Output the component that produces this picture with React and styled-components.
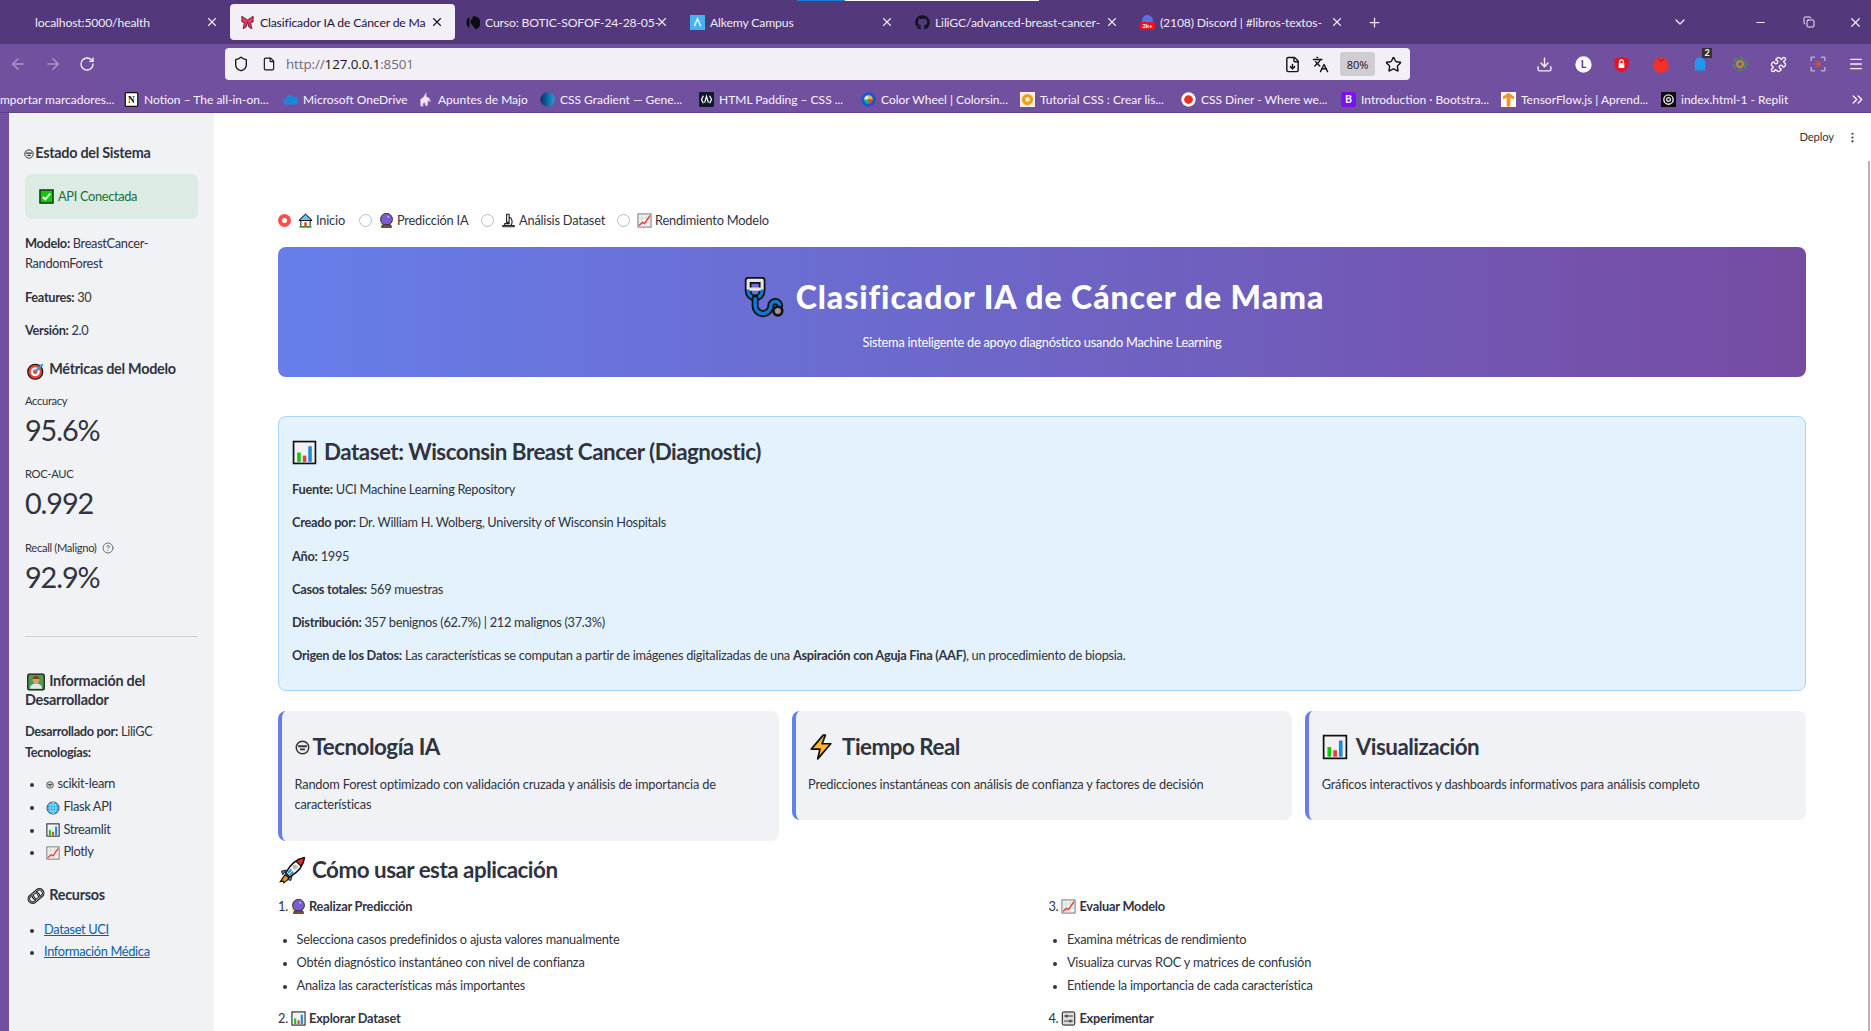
import React from "react";
import styled, { createGlobalStyle } from "styled-components";
import {
  ArrowLeft,
  ArrowRight,
  RotateCw,
  Shield,
  File,
  Star,
  Download,
  Languages,
  Puzzle,
  Menu,
  X,
  Plus,
  ChevronDown,
  Minus,
  Copy,
  FileDown,
  ChevronsRight,
  CircleHelp,
  MoreVertical,
} from "lucide-react";
import { FaGithub } from "react-icons/fa";

const GlobalStyle = createGlobalStyle`
  html, body { margin: 0; padding: 0; background: #fff; }
  body { font-family: "Lato", "Noto Sans", sans-serif; color: #31333f; overflow: hidden; }
  * { box-sizing: border-box; }
`;

const Ico = styled.svg`
  width: ${(p) => p.$s || 14}px;
  height: ${(p) => p.$s || 14}px;
  flex: none;
  display: inline-block;
  vertical-align: middle;
`;

const shapes = {
  brain: (
    <>
      <circle cx="12" cy="12" r="10" fill="#eee" stroke="#333" strokeWidth="2.4" />
      <path d="M5 10h14M8 15h8" stroke="#333" strokeWidth="3" />
    </>
  ),
  check: (
    <>
      <rect x="1.5" y="1.5" width="21" height="21" fill="#16c60c" stroke="#111" strokeWidth="2" />
      <path d="M6 12.5l4 4 8-9" fill="none" stroke="#fff" strokeWidth="3" />
    </>
  ),
  target: (
    <>
      <circle cx="11" cy="13" r="10" fill="#e8412c" stroke="#111" strokeWidth="1.6" />
      <circle cx="11" cy="13" r="6" fill="#fff" />
      <circle cx="11" cy="13" r="3" fill="#e8412c" />
      <path d="M11 13L21 3" stroke="#2a9be0" strokeWidth="3" />
    </>
  ),
  chart: (
    <>
      <rect x="1.5" y="1.5" width="21" height="21" fill="#f2f2f2" stroke="#111" strokeWidth="1.6" />
      <rect x="5" y="12" width="3.4" height="9" fill="#16c60c" />
      <rect x="10.4" y="15" width="3.4" height="6" fill="#e8412c" />
      <rect x="15.6" y="6" width="3.4" height="15" fill="#1e88e5" />
    </>
  ),
  graph: (
    <>
      <rect x="1.5" y="1.5" width="21" height="21" fill="#f2f2f2" stroke="#666" strokeWidth="1.4" />
      <path d="M2 8h20M2 15h20M8 2v20M15 2v20" stroke="#ccc" strokeWidth="1" />
      <path d="M3 20l6-5 3 2 9-13" fill="none" stroke="#e8412c" strokeWidth="2.2" />
    </>
  ),
  globe: (
    <>
      <circle cx="12" cy="12" r="10.5" fill="#12a5e8" stroke="#222" strokeWidth="1.2" />
      <path d="M2 12h20M3.5 7h17M3.5 17h17M12 2v20" stroke="#d8f2ff" strokeWidth="1.1" />
      <ellipse cx="12" cy="12" rx="5" ry="10" fill="none" stroke="#d8f2ff" strokeWidth="1.1" />
    </>
  ),
  link: (
    <g fill="none" transform="rotate(-40 12 12)">
      <rect x="1" y="7" width="15" height="10" rx="5" stroke="#111" strokeWidth="3.4" />
      <rect x="8" y="7" width="15" height="10" rx="5" stroke="#111" strokeWidth="3.4" />
      <rect x="1" y="7" width="15" height="10" rx="5" stroke="#aaa" strokeWidth="1.2" />
      <rect x="8" y="7" width="15" height="10" rx="5" stroke="#aaa" strokeWidth="1.2" />
    </g>
  ),
  dev: (
    <>
      <rect x="1" y="1.5" width="22" height="21" rx="2" fill="#4f9d4a" stroke="#111" strokeWidth="1.6" />
      <circle cx="12" cy="9" r="4.5" fill="#e0a060" />
      <path d="M7.5 8a4.5 4 0 019 0z" fill="#7a4520" />
      <path d="M4 21c0-5 4-7 8-7s8 2 8 7z" fill="#dfe8f2" />
    </>
  ),
  house: (
    <>
      <path d="M12 2L1.5 12h3v10h15V12h3z" fill="#f4f4f4" stroke="#111" strokeWidth="1.5" />
      <path d="M12 2L1.5 12h21z" fill="#6fc4e8" stroke="#111" strokeWidth="1.5" />
      <rect x="10" y="15" width="4" height="7" fill="#e8412c" />
      <path d="M2 22.5h20" stroke="#16c60c" strokeWidth="2" />
    </>
  ),
  crystal: (
    <>
      <circle cx="12" cy="10" r="9.5" fill="#7d5bd0" stroke="#222" strokeWidth="1.4" />
      <circle cx="15" cy="6" r="1.6" fill="#cdb8ff" />
      <path d="M5 19h14l1 4H4z" fill="#8a5a32" stroke="#222" strokeWidth="1.2" />
      <circle cx="3" cy="17" r="1.4" fill="#f4c20d" />
    </>
  ),
  micro: (
    <g fill="none" stroke="#222" strokeWidth="1.8">
      <path d="M9 2h4v13H9zM13 6c5 2 6 9 3 14" />
      <path d="M3 22h18v-2H3z" fill="#eee" />
      <path d="M6 20v-3h8" />
    </g>
  ),
  stetho: (
    <g fill="none" strokeLinecap="round" strokeLinejoin="round">
      <path d="M3.5 2.5h8v6a4 4 0 01-8 0z" stroke="#111" strokeWidth="3.8" />
      <path d="M3.5 2.5h8v5h-8z" stroke="#e4e4e4" strokeWidth="1.8" />
      <path d="M3.5 8.5a4 4 0 008 0" stroke="#0f78d4" strokeWidth="1.8" />
      <path d="M7.5 13v4a4.5 4.5 0 009 0 2.5 2.5 0 015 0" stroke="#111" strokeWidth="4" />
      <path d="M7.5 13v4a4.5 4.5 0 009 0 2.5 2.5 0 015 0" stroke="#0f78d4" strokeWidth="2" />
      <circle cx="20.5" cy="20" r="2.5" fill="#999" stroke="#111" strokeWidth="1.5" />
    </g>
  ),
  zap: <path d="M14 1L3 14h8l-2 9 12-14h-8l3-8z" fill="#fcb72a" stroke="#111" strokeWidth="1.6" strokeLinejoin="round" />,
  rocket: (
    <>
      <path d="M6 16l-4 6 2.5-.5L5 23l5-4z" fill="#f7941d" stroke="#111" strokeWidth="1" />
      <path d="M22.5 1.5c-7 1-12 6-16 13l3.5 3.500c7-4 12-9 12.500-16.500z" fill="#f4f6f8" stroke="#111" strokeWidth="1.4" />
      <path d="M22.5 1.5c-3 .4-5 1.3-7 3l4 4c1.8-2 2.8-4 3-7z" fill="#e8321c" stroke="#111" strokeWidth="1" />
      <circle cx="14.5" cy="9.5" r="2" fill="#bbb" />
      <path d="M8.5 14.5l3-3M10 16.5l3-3" stroke="#2a9be0" strokeWidth="1.8" />
      <path d="M7 12l-4 1 1 3zM12 17l-1 4-3-1z" fill="#2a9be0" stroke="#111" strokeWidth=".8" />
    </>
  ),
  knobs: (
    <>
      <rect x="2" y="1.5" width="20" height="21" rx="2" fill="#ddd" stroke="#111" strokeWidth="1.6" />
      <path d="M5 8h14M5 16h14" stroke="#333" strokeWidth="1.5" />
      <circle cx="9" cy="8" r="2.4" fill="#555" />
      <circle cx="15" cy="16" r="2.4" fill="#555" />
    </>
  ),
  ribbon: <path d="M12 8L3 2v9l4 1-2 10 5-3 2-8 2 8 5 3-2-10 4-1V2z" fill="#f0386b" stroke="#311" strokeWidth="1.2" />,
  k: <path d="M7 3a11 11 0 000 18zM13 2L8 11l9 12a11 11 0 000-21z" fill="#0d0d0d" />,
  alkemy: (
    <>
      <rect x="0" y="0" width="24" height="24" fill="#44b4f0" />
      <path d="M7 18l5-12 5 12" fill="none" stroke="#e8f7ff" strokeWidth="2.4" />
    </>
  ),
  discord: (
    <>
      <circle cx="12" cy="9" r="9" fill="#5572e8" />
      <rect x="0" y="11" width="24" height="13" rx="2" fill="#e81224" />
      <text x="12" y="21.5" fontSize="10" fontWeight="700" textAnchor="middle" fill="#fff" fontFamily="Lato">2k+</text>
    </>
  ),
  notion: (
    <>
      <rect x="2" y="1" width="20" height="22" rx="2" fill="#fff" stroke="#111" strokeWidth="2" />
      <text x="12" y="18" fontSize="15" fontWeight="700" textAnchor="middle" fill="#111" fontFamily="Liberation Serif">N</text>
    </>
  ),
  onedrive: <path d="M6 20a5 5 0 01-1-10 7 7 0 0113-2 6 6 0 013 12z" fill="#1a86d8" />,
  unicorn: <path d="M4 22V12l5-4 4-7v6l5 3 2 5-4-1-1 8H12l-1-5-3 1v5z" fill="#f3e4f2" stroke="#c9a6d8" strokeWidth="1" />,
  gradient: (
    <>
      <defs>
        <linearGradient id="gd" x1="0" x2="1">
          <stop offset="0" stopColor="#0a2a6a" />
          <stop offset="1" stopColor="#19a5d8" />
        </linearGradient>
      </defs>
      <circle cx="12" cy="12" r="11.5" fill="url(#gd)" />
    </>
  ),
  mdn: (
    <>
      <rect width="24" height="24" rx="2" fill="#10182c" />
      <path d="M7 6l-3 6 3 6M17 6l3 6-3 6M9 17l3-10 3 10" fill="none" stroke="#fff" strokeWidth="2" />
    </>
  ),
  wheel: (
    <>
      <circle cx="12" cy="12" r="11.5" fill="#1a55d8" />
      <path d="M12 5a7 7 0 017 7h-7z" fill="#f4c20d" />
      <path d="M19 12a7 7 0 01-7 7v-7z" fill="#e8412c" />
      <path d="M12 19a7 7 0 01-7-7h7z" fill="#19b86a" />
      <path d="M5 12a7 7 0 017-7v7z" fill="#eee" />
    </>
  ),
  tutorial: (
    <>
      <rect width="24" height="24" fill="#fdf2dd" />
      <circle cx="12" cy="12" r="9" fill="#f0a020" />
      <circle cx="12" cy="12" r="3.5" fill="#fdf2dd" />
    </>
  ),
  diner: (
    <>
      <circle cx="12" cy="12" r="11.5" fill="#fff" />
      <circle cx="12" cy="12" r="7" fill="#e8321c" />
    </>
  ),
  boot: (
    <>
      <rect width="24" height="24" rx="5" fill="#7a12f2" />
      <text x="12" y="18" fontSize="17" fontWeight="700" textAnchor="middle" fill="#fff" fontFamily="Lato">B</text>
    </>
  ),
  tf: (
    <>
      <rect width="24" height="24" fill="#fff" />
      <path d="M12 1L3 7v5l6-3v14h6V9l6 3V7z" fill="#f7931e" />
    </>
  ),
  replit: (
    <>
      <rect width="24" height="24" fill="#0b0b0b" />
      <circle cx="12" cy="12" r="7.5" fill="none" stroke="#eee" strokeWidth="2.2" />
      <circle cx="12" cy="12" r="3" fill="none" stroke="#eee" strokeWidth="2" />
    </>
  ),
  lbadge: (
    <>
      <circle cx="12" cy="12" r="11.5" fill="#fff" />
      <text x="12" y="17.5" fontSize="15" fontWeight="700" textAnchor="middle" fill="#53387b" fontFamily="Lato">L</text>
    </>
  ),
  redshield: (
    <>
      <path d="M12 1l10 3v8c0 6-5 9-10 11C7 21 2 18 2 12V4z" fill="#e81224" />
      <rect x="8" y="10" width="8" height="7" fill="#fff" />
      <path d="M9.5 10V8a2.5 2.5 0 015 0v2" fill="none" stroke="#fff" strokeWidth="1.6" />
    </>
  ),
  tomato: (
    <>
      <circle cx="12" cy="13.5" r="10.5" fill="#f0302a" />
      <path d="M7 4l5 3 5-3-3 5h-4z" fill="#c82020" />
    </>
  ),
  ghost: <path d="M5 22V10a7 7 0 0114 0v12l-3-3-2 3-2-3-2 3-2-3z" fill="#1e9be8" />,
  ring: (
    <g fill="none" strokeWidth="3">
      <circle cx="12" cy="12" r="8" stroke="#3f8d5a" strokeDasharray="6 3" />
      <circle cx="12" cy="12" r="4" stroke="#b78a2c" />
    </g>
  ),
  scan: (
    <>
      <path d="M3 8V3h5M16 3h5v5M21 16v5h-5M8 21H3v-5" fill="none" stroke="#b9a9cc" strokeWidth="2" />
      <circle cx="12" cy="12" r="4" fill="#c0504d" />
    </>
  ),
};

const Emoji = ({ name, size }) => (
  <Ico viewBox="0 0 24 24" $s={size} aria-hidden="true">
    {shapes[name]}
  </Ico>
);

/* browser chrome */
const Chrome = styled.header`
  background: #53387b;
  position: relative;
`;
const LoadLine = styled.div`
  position: absolute;
  top: 0;
  left: 797px;
  width: 242px;
  height: 1px;
  background: linear-gradient(90deg, #1c7fd6 20%, #fff 20%);
`;
const TabStrip = styled.div`
  height: 44px;
  display: flex;
  align-items: flex-end;
  padding: 4px 0 4px 5px;
  color: #efe9f6;
`;
const Tab = styled.div`
  width: 225px;
  height: 36px;
  flex: none;
  display: flex;
  align-items: center;
  gap: 5px;
  padding: 0 11px 0 ${(p) => (p.$plain ? "30px" : "10px")};
  font-size: 12.2px;
  letter-spacing: -0.15px;
  border-radius: 4px;
  background: ${(p) => (p.$active ? "#f3eff7" : "transparent")};
  color: ${(p) => (p.$active ? "#20123a" : "#efe9f6")};
`;
const TabTitle = styled.span`
  flex: 1;
  min-width: 0;
  white-space: nowrap;
`;
const WindowControls = styled.div`
  flex: 1;
  display: flex;
  align-items: center;
  height: 36px;
  padding-left: 12px;
`;
const Spacer = styled.div`
  flex: 1;
`;
const Ctl = styled.span`
  display: flex;
  width: ${(p) => p.$w}px;
  margin-left: ${(p) => p.$ml || 0}px;
  justify-content: center;
`;
const Toolbar = styled.div`
  height: 42px;
  background: #7150a0;
  display: flex;
  align-items: flex-start;
  padding: 4px 0 0 9px;
  color: #f4f0f8;
`;
const NavIcons = styled.div`
  width: 216px;
  height: 32px;
  display: flex;
  align-items: center;
  gap: 17px;
  color: #a995c6;
`;
const UrlBar = styled.div`
  width: 1185px;
  height: 32px;
  background: #f3eff7;
  border-radius: 4px;
  display: flex;
  align-items: center;
  padding: 0 8px;
  color: #15141a;
  font-size: 13.4px;
  font-family: "Open Sans", sans-serif;
`;
const PageIcon = styled.span`
  display: flex;
  margin-left: 13px;
`;
const Url = styled.span`
  margin-left: 10px;
  flex: 1;
  color: #6d6b72;
  letter-spacing: -0.1px;
  & b {
    font-weight: 400;
    color: #15141a;
  }
`;
const Translate = styled.span`
  display: flex;
  margin-left: 11px;
`;
const Zoom = styled.span`
  width: 35px;
  height: 24px;
  margin: 0 10px 0 11px;
  background: #cfccd2;
  border-radius: 3px;
  font-size: 11px;
  display: flex;
  align-items: center;
  justify-content: center;
`;
const ToolIcons = styled.div`
  flex: 1;
  height: 32px;
  display: flex;
  align-items: center;
  padding-left: 126px;
  gap: 21.5px;
`;
const Badged = styled.span`
  position: relative;
  display: flex;
`;
const Badge = styled.span`
  position: absolute;
  top: -7px;
  right: -3px;
  width: 10px;
  height: 10px;
  background: #333;
  color: #fff;
  font-size: 9px;
  font-weight: 700;
  line-height: 10px;
  text-align: center;
`;
const Bookmarks = styled.nav`
  height: 27px;
  background: #7150a0;
  border-bottom: 1px solid #5d4189;
  display: flex;
  align-items: center;
  color: #f7f4fa;
  font-size: 12px;
  white-space: nowrap;
  overflow: hidden;
  position: relative;
`;
const Mark = styled.span`
  width: ${(p) => p.$w}px;
  margin-left: ${(p) => p.$ml || 0}px;
  flex: none;
  display: flex;
  align-items: center;
  gap: 5px;
`;
const Overflow = styled.span`
  position: absolute;
  right: 5px;
  top: 5px;
  display: flex;
`;

/* app body */
const Body = styled.div`
  display: flex;
  height: 918px;
  overflow: hidden;
`;
const Edge = styled.div`
  width: 9px;
  flex: none;
  background: #7150a0;
`;
const Sidebar = styled.aside`
  width: 205px;
  flex: none;
  background: #f0f2f6;
  padding: 30px 16px 0;
  font-size: 12.8px;
  line-height: 20.4px;
  letter-spacing: -0.33px;
`;
const SideHead = styled.h4`
  margin: ${(p) => p.$mt || 0}px 0 0;
  font-size: 14.4px;
  line-height: ${(p) => p.$lh || 20}px;
  font-weight: 700;
  letter-spacing: -0.27px;
  & svg {
    margin: 0 ${(p) => (p.$small ? -2 : 1)}px 0 ${(p) => (p.$small ? -1 : 2)}px;
  }
`;
const Alert = styled.div`
  height: 45px;
  margin-top: 11px;
  background: #dcebe4;
  border-radius: 6px;
  color: #177233;
  display: flex;
  align-items: center;
  gap: 4px;
  padding-left: 14px;
`;
const SideText = styled.p`
  margin: ${(p) => p.$mt || 0}px 0 ${(p) => (p.$tight ? 0 : 12.8)}px;
  & b {
    font-weight: 700;
  }
`;
const MetricBlock = styled.div`
  height: 73.5px;
  margin-top: ${(p) => p.$mt || 0}px;
`;
const MetricLabel = styled.div`
  height: 16px;
  font-size: 11.2px;
  line-height: 16px;
  display: flex;
  align-items: center;
  gap: 6px;
`;
const MetricValue = styled.div`
  margin-top: 3px;
  font-size: 28.8px;
  line-height: 36px;
  letter-spacing: -1.1px;
`;
const Rule = styled.hr`
  margin: 23px 0 0;
  border: 0;
  border-top: 1px solid #d0d1d5;
`;
const SideList = styled.ul`
  margin: ${(p) => p.$mt || 11}px 0 0;
  padding: 0 0 0 19px;
  & li {
    margin-bottom: ${(p) => p.$gap || 2.3}px;
  }
  & li svg {
    margin: 0 1px 0 1.5px;
  }
  & li::marker {
    font-size: 11px;
  }
`;
const Link = styled.a`
  color: #0b5cad;
  text-decoration: underline;
`;
const Main = styled.main`
  flex: 1;
  min-width: 0;
  padding: 0 65px 0 64px;
  font-size: 12.8px;
  line-height: 20.4px;
  position: relative;
`;
const Scrollbar = styled.div`
  position: absolute;
  top: 48px;
  right: 1px;
  bottom: 0;
  width: 2px;
  background: #b5b5b8;
`;
const TopBar = styled.div`
  height: 48px;
  margin-right: -65px;
  padding: 0 12px 0 0;
  display: flex;
  justify-content: flex-end;
  align-items: center;
  gap: 12px;
  font-size: 11.2px;
  letter-spacing: -0.1px;
`;
const RadioRow = styled.div`
  margin-top: 49px;
  height: 20px;
  display: flex;
  align-items: center;
  letter-spacing: -0.2px;
`;
const RadioItem = styled.label`
  display: flex;
  align-items: center;
  width: ${(p) => p.$w}px;
  flex: none;
  gap: 3px;
`;
const Dot = styled.span`
  width: 13px;
  height: 13px;
  flex: none;
  margin-right: 4px;
  border-radius: 50%;
  background: ${(p) => (p.$on ? "#ff4b4b" : "#fff")};
  border: ${(p) => (p.$on ? "none" : "1px solid #bbbcc2")};
  display: flex;
  align-items: center;
  justify-content: center;
  &::after {
    content: "";
    display: ${(p) => (p.$on ? "block" : "none")};
    width: 5px;
    height: 5px;
    border-radius: 50%;
    background: #fff;
  }
`;
const Banner = styled.section`
  margin-top: 17px;
  height: 130px;
  border-radius: 8px;
  background: linear-gradient(90deg, #667eea 0%, #764ba2 100%);
  color: #fff;
  text-align: center;
  padding-top: 29px;
`;
const BannerTitle = styled.h1`
  margin: 0;
  padding-right: 18px;
  font-size: 32px;
  line-height: 40px;
  font-weight: 900;
  letter-spacing: 0.95px;
  display: flex;
  justify-content: center;
  align-items: center;
  gap: 12px;
`;
const BannerSub = styled.p`
  margin: 14px 0 0;
  letter-spacing: -0.25px;
`;
const DatasetBox = styled.section`
  margin-top: 39px;
  height: 275px;
  background: #e3f2fd;
  border: 1px solid #a9d5f7;
  border-radius: 8px;
  padding: 21px 13px 0;
`;
const H3 = styled.h3`
  margin: ${(p) => p.$mt || 0}px 0 0;
  font-size: 22.4px;
  line-height: 28px;
  font-weight: 700;
  letter-spacing: -0.5px;
  display: flex;
  align-items: center;
  gap: ${(p) => p.$gap || 6}px;
`;
const InfoLine = styled.p`
  margin: 0 0 12.9px;
  letter-spacing: -0.28px;
  & b {
    font-weight: 700;
  }
`;
const InfoList = styled.div`
  margin-top: 13px;
`;
const Cards = styled.div`
  margin-top: 20px;
  display: grid;
  grid-template-columns: repeat(3, 1fr);
  gap: 12.8px;
  align-items: start;
`;
const Card = styled.article`
  background: #f0f2f6;
  border-left: 4px solid #667eea;
  border-radius: 8px;
  padding: 22px 16px 26px 12.5px;
`;
const CardBody = styled.p`
  margin: 13px 0 0;
  letter-spacing: -0.2px;
`;
const Columns = styled.div`
  margin-top: 12px;
  display: grid;
  grid-template-columns: 1fr 1fr;
  column-gap: 12.8px;
  letter-spacing: -0.22px;
`;
const StepTitle = styled.div`
  display: flex;
  align-items: center;
  gap: 3px;
  & b {
    font-weight: 700;
  }
`;
const StepList = styled.ul`
  margin: 12.5px 0 13px;
  padding: 0 0 0 18.5px;
  & li {
    margin-bottom: 2.5px;
  }
  & li::marker {
    font-size: 11px;
  }
`;

const tabs = [
  { title: "Clasificador IA de Cáncer de Ma", icon: "ribbon", active: true },
  { title: "Curso: BOTIC-SOFOF-24-28-05-", icon: "k" },
  { title: "Alkemy Campus", icon: "alkemy" },
  { title: "LiliGC/advanced-breast-cancer-", github: true },
  { title: "(2108) Discord | #libros-textos-", icon: "discord" },
];

const marks = [
  ["notion", "Notion – The all-in-on...", 159],
  ["onedrive", "Microsoft OneDrive", 135],
  ["unicorn", "Apuntes de Majo", 122],
  ["gradient", "CSS Gradient — Gene...", 159],
  ["mdn", "HTML Padding – CSS ...", 162],
  ["wheel", "Color Wheel | Colorsin...", 159],
  ["tutorial", "Tutorial CSS : Crear lis...", 161],
  ["diner", "CSS Diner - Where we...", 160],
  ["boot", "Introduction · Bootstra...", 160],
  ["tf", "TensorFlow.js | Aprend...", 160],
  ["replit", "index.html-1 - Replit", 130],
];

const steps = [
  {
    n: "1.",
    icon: "crystal",
    title: "Realizar Predicción",
    items: [
      "Selecciona casos predefinidos o ajusta valores manualmente",
      "Obtén diagnóstico instantáneo con nivel de confianza",
      "Analiza las características más importantes",
    ],
  },
  {
    n: "3.",
    icon: "graph",
    title: "Evaluar Modelo",
    items: [
      "Examina métricas de rendimiento",
      "Visualiza curvas ROC y matrices de confusión",
      "Entiende la importancia de cada característica",
    ],
  },
  { n: "2.", icon: "chart", title: "Explorar Dataset", items: [] },
  { n: "4.", icon: "knobs", title: "Experimentar", items: [] },
];

const radios = [
  ["house", "Inicio", 81, true],
  ["crystal", "Predicción IA", 122],
  ["micro", "Análisis Dataset", 136],
  ["graph", "Rendimiento Modelo", 160],
];

const infoLines = [
  ["Fuente:", "UCI Machine Learning Repository"],
  ["Creado por:", "Dr. William H. Wolberg, University of Wisconsin Hospitals"],
  ["Año:", "1995"],
  ["Casos totales:", "569 muestras"],
  ["Distribución:", "357 benignos (62.7%) | 212 malignos (37.3%)"],
];

const cards = [
  ["brain", "Tecnología IA", "Random Forest optimizado con validación cruzada y análisis de importancia de características", 15, 3],
  ["zap", "Tiempo Real", "Predicciones instantáneas con análisis de confianza y factores de decisión", 26, 8],
  ["chart", "Visualización", "Gráficos interactivos y dashboards informativos para análisis completo", 26, 8],
];

export default function App() {
  return (
    <>
      <GlobalStyle />
      <Chrome>
        <LoadLine />
        <TabStrip>
          <Tab $plain>
            <TabTitle>localhost:5000/health</TabTitle>
            <X size={14} />
          </Tab>
          {tabs.map((t) => (
            <Tab key={t.title} $active={t.active}>
              {t.github ? <FaGithub size={15} color="#16101f" /> : <Emoji name={t.icon} size={15} />}
              <TabTitle>{t.title}</TabTitle>
              <X size={14} />
            </Tab>
          ))}
          <WindowControls>
            <Plus size={15} />
            <Ctl $w={16} $ml={290}>
              <ChevronDown size={16} />
            </Ctl>
            <Spacer />
            <Ctl $w={36}>
              <Minus size={13} />
            </Ctl>
            <Ctl $w={62}>
              <Copy size={12} />
            </Ctl>
            <Ctl $w={31}>
              <X size={15} />
            </Ctl>
          </WindowControls>
        </TabStrip>
        <Toolbar>
          <NavIcons>
            <ArrowLeft size={18} />
            <ArrowRight size={18} />
            <RotateCw size={16} color="#f4f0f8" />
          </NavIcons>
          <UrlBar>
            <Shield size={16} />
            <PageIcon>
              <File size={14} />
            </PageIcon>
            <Url>
              http://<b>127.0.0.1</b>:8501
            </Url>
            <FileDown size={17} />
            <Translate>
              <Languages size={17} />
            </Translate>
            <Zoom>80%</Zoom>
            <Star size={17} />
          </UrlBar>
          <ToolIcons>
            <Download size={17} />
            <Emoji name="lbadge" size={17} />
            <Emoji name="redshield" size={17} />
            <Emoji name="tomato" size={18} />
            <Badged>
              <Emoji name="ghost" size={18} />
              <Badge>2</Badge>
            </Badged>
            <Emoji name="ring" size={18} />
            <Puzzle size={17} />
            <Emoji name="scan" size={18} />
            <Menu size={16} />
          </ToolIcons>
        </Toolbar>
        <Bookmarks>
          <Mark $w={127} $ml={-3}>importar marcadores...</Mark>
          {marks.map(([icon, label, w]) => (
            <Mark key={label} $w={w}>
              <Emoji name={icon} size={15} />
              {label}
            </Mark>
          ))}
          <Overflow>
            <ChevronsRight size={17} />
          </Overflow>
        </Bookmarks>
      </Chrome>
      <Body>
        <Edge />
        <Sidebar>
          <SideHead $small>
            <Emoji name="brain" size={10} /> Estado del Sistema
          </SideHead>
          <Alert>
            <Emoji name="check" size={15} />
            API Conectada
          </Alert>
          <SideText $mt={14}>
            <b>Modelo:</b> BreastCancer-
            <br />
            RandomForest
          </SideText>
          <SideText>
            <b>Features:</b> 30
          </SideText>
          <SideText $tight>
            <b>Versión:</b> 2.0
          </SideText>
          <SideHead $mt={19}>
            <Emoji name="target" size={18} /> Métricas del Modelo
          </SideHead>
          <MetricBlock $mt={13}>
            <MetricLabel>Accuracy</MetricLabel>
            <MetricValue>95.6%</MetricValue>
          </MetricBlock>
          <MetricBlock>
            <MetricLabel>ROC-AUC</MetricLabel>
            <MetricValue>0.992</MetricValue>
          </MetricBlock>
          <MetricBlock>
            <MetricLabel>
              Recall (Maligno) <CircleHelp size={12} color="#6b6d77" />
            </MetricLabel>
            <MetricValue>92.9%</MetricValue>
          </MetricBlock>
          <Rule />
          <SideHead $mt={35} $lh={17}>
            <Emoji name="dev" size={18} /> Información del
            <br />
            Desarrollador
          </SideHead>
          <SideText $mt={13} $tight>
            <b>Desarrollado por:</b> LiliGC
            <br />
            <b>Tecnologías:</b>
          </SideText>
          <SideList>
            <li>
              <Emoji name="brain" size={8} /> scikit-learn
            </li>
            <li>
              <Emoji name="globe" size={14} /> Flask API
            </li>
            <li>
              <Emoji name="chart" size={14} /> Streamlit
            </li>
            <li>
              <Emoji name="graph" size={14} /> Plotly
            </li>
          </SideList>
          <SideHead $mt={23}>
            <Emoji name="link" size={18} /> Recursos
          </SideHead>
          <SideList $mt={14} $gap={1.9}>
            <li>
              <Link href="#uci">Dataset UCI</Link>
            </li>
            <li>
              <Link href="#info">Información Médica</Link>
            </li>
          </SideList>
        </Sidebar>
        <Main>
          <Scrollbar />
          <TopBar>
            Deploy
            <MoreVertical size={13} />
          </TopBar>
          <RadioRow>
            {radios.map(([icon, label, w, on]) => (
              <RadioItem key={label} $w={w}>
                <Dot $on={on} />
                <Emoji name={icon} size={15} />
                {label}
              </RadioItem>
            ))}
          </RadioRow>
          <Banner>
            <BannerTitle>
              <Emoji name="stetho" size={42} />
              Clasificador IA de Cáncer de Mama
            </BannerTitle>
            <BannerSub>Sistema inteligente de apoyo diagnóstico usando Machine Learning</BannerSub>
          </Banner>
          <DatasetBox>
            <H3 $gap={7}>
              <Emoji name="chart" size={25} />
              Dataset: Wisconsin Breast Cancer (Diagnostic)
            </H3>
            <InfoList>
              {infoLines.map(([k, v]) => (
                <InfoLine key={k}>
                  <b>{k}</b> {v}
                </InfoLine>
              ))}
              <InfoLine>
                <b>Origen de los Datos:</b> Las características se computan a partir de imágenes digitalizadas de una{" "}
                <b>Aspiración con Aguja Fina (AAF)</b>, un procedimiento de biopsia.
              </InfoLine>
            </InfoList>
          </DatasetBox>
          <Cards>
            {cards.map(([icon, title, text, size, gap]) => (
              <Card key={title}>
                <H3 $gap={gap}>
                  <Emoji name={icon} size={size} />
                  {title}
                </H3>
                <CardBody>{text}</CardBody>
              </Card>
            ))}
          </Cards>
          <H3 $mt={15}>
            <Emoji name="rocket" size={28} />
            Cómo usar esta aplicación
          </H3>
          <Columns>
            {steps.map((s) => (
              <div key={s.n}>
                <StepTitle>
                  {s.n} <Emoji name={s.icon} size={15} /> <b>{s.title}</b>
                </StepTitle>
                <StepList>
                  {s.items.map((i) => (
                    <li key={i}>{i}</li>
                  ))}
                </StepList>
              </div>
            ))}
          </Columns>
        </Main>
      </Body>
    </>
  );
}
